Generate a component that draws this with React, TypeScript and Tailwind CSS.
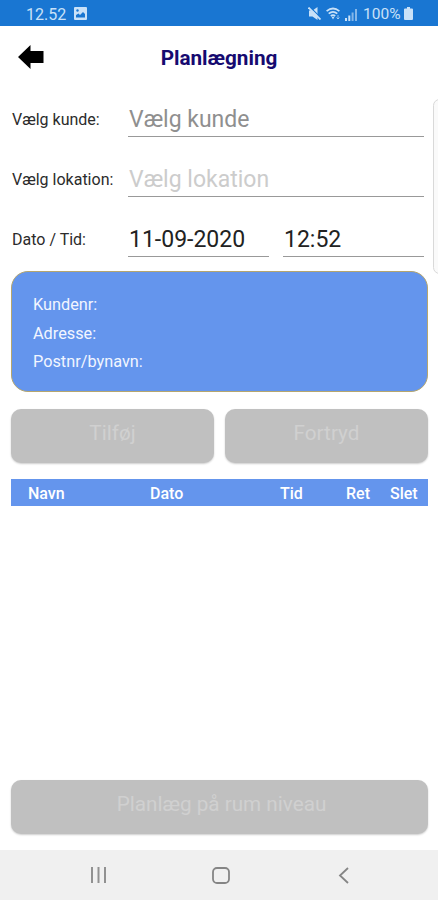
import type { ReactNode } from 'react'

interface FieldRowProps {
  label: string
  children: ReactNode
}

function FieldRow({ label, children }: FieldRowProps) {
  return (
    <div className="flex h-[60px] items-center pl-3 pr-3.5">
      <span className="w-[116px] shrink-0 whitespace-nowrap pt-0.5 text-[16px] text-[#2b2b2b]">{label}</span>
      {children}
    </div>
  )
}

interface FieldProps {
  value: string
  className: string
}

function Field({ value, className }: FieldProps) {
  return (
    <div
      className={`flex h-9 items-center whitespace-nowrap border-b border-[#999999] pl-px pt-[3px] text-[23px] ${className}`}
    >
      {value}
    </div>
  )
}

interface DisabledButtonProps {
  label: string
  className: string
}

function DisabledButton({ label, className }: DisabledButtonProps) {
  return (
    <button
      disabled
      className={`h-[54px] rounded-[10px] bg-[#c0c0c0] pb-1 text-[20.7px] text-[#d0d0d0] shadow-[0_1px_2px_rgba(0,0,0,0.2)] ${className}`}
    >
      {label}
    </button>
  )
}

function StatusBar() {
  return (
    <div className="flex h-[26px] shrink-0 items-center bg-[#1976d2] pl-[26px] pr-[25px] pt-[3px] text-[16px] text-[#c9e1f8]">
      <span className="w-[48px]">12.52</span>
      {/* Picture notification */}
      <svg className="-mt-0.5" width="13" height="13" viewBox="0 0 13 13" fill="none">
        <rect width="13" height="13" rx="1" fill="#c9e1f8" />
        <path d="M2 10.500V8l2.500-1.500L6 8l3-3 2 2v3.500z" fill="#1976d2" />
        <circle cx="3.500" cy="3.500" r="1.200" fill="#1976d2" />
      </svg>
      <div className="ml-auto flex items-center">
        {/* Muted speaker */}
        <svg className="-mt-0.5" width="13" height="13" viewBox="0 0 13 13" fill="#c9e1f8">
          <path d="M1 3.500h3.500L9.500 0v13L4.500 9.500H1z" />
          <path d="M2 0l11 11" stroke="#1976d2" strokeWidth="1.200" />
          <path d="M.5 .5L12.500 12.500" stroke="#c9e1f8" strokeWidth="1.800" />
        </svg>
        {/* Wifi */}
        <svg className="-mt-0.5 ml-[5px]" width="15" height="13" viewBox="0 0 15 13" fill="none" stroke="#c9e1f8" strokeWidth="1.700">
          <path d="M.6 4.200Q7 -1.200 13.400 4.200" />
          <path d="M2.700 6.700Q7 3 11.300 6.700" />
          <path d="M4.800 9Q7 7.200 9.200 9" />
          <path d="M5.500 9.800L7 12.500l1.500-2.700z" fill="#c9e1f8" stroke="none" />
          <path d="M12 8v4M10.500 10.500L12 12l1.500-1.500" strokeWidth="1" opacity=".7" />
        </svg>
        {/* Signal */}
        <svg className="ml-1" width="13" height="12" viewBox="0 0 13 12" fill="#c9e1f8">
          <path d="M0 9h2v3H0zM3.300 6.500h2V12h-2z" />
          <path d="M6.600 3.500h2V12h-2zM10 0h2v12h-2z" opacity=".6" />
        </svg>
        <span className="ml-[5px] w-[39px] whitespace-nowrap text-[15.500px]">100%</span>
        {/* Battery */}
        <svg className="-mt-0.5 ml-0.5" width="9" height="13" viewBox="0 0 9 13" fill="#c9e1f8">
          <path d="M3 0h3v1.500h2q1 0 1 1V12q0 1-1 1H1q-1 0-1-1V2.500q0-1 1-1h2z" />
        </svg>
      </div>
    </div>
  )
}

function NavigationBar() {
  return (
    <div className="flex h-[50px] shrink-0 items-center bg-[#f0f0f0] pl-[90px] pr-[89px]">
      <svg width="17" height="16" viewBox="0 0 17 16" stroke="#919191" strokeWidth="2">
        <path d="M2 0v16M8.500 0v16M15 0v16" />
      </svg>
      <svg className="ml-[105px]" width="18" height="17" viewBox="0 0 18 17" fill="none" stroke="#858585" strokeWidth="1.800">
        <rect x="1" y="1" width="16" height="15" rx="4" />
      </svg>
      <svg className="ml-auto" width="11" height="17" viewBox="0 0 11 17" fill="none" stroke="#858585" strokeWidth="1.800">
        <path d="M10 1L2 8.500L10 16" />
      </svg>
    </div>
  )
}

export default function App() {
  return (
    <div className="relative flex h-[900px] w-[438px] flex-col overflow-hidden bg-white font-['Roboto','Liberation_Sans',sans-serif]">
      <StatusBar />

      {/* Header */}
      <header className="grid h-[63px] shrink-0 grid-cols-[1fr_auto_1fr] items-center px-[18px]">
        <svg className="-mt-px" width="26" height="26" viewBox="0 0 26 26" fill="#000">
          <path d="M0 13L12.500 1v6H25.500v12H12.500v6z" />
        </svg>
        <h1 className="pt-0.5 text-[20.7px] font-bold text-[#160a70]">Planlægning</h1>
      </header>

      {/* Form */}
      <FieldRow label="Vælg kunde:">
        <Field value="Vælg kunde" className="flex-1 text-[#8f8f8f]" />
      </FieldRow>
      <FieldRow label="Vælg lokation:">
        <Field value="Vælg lokation" className="flex-1 text-[#cccccc]" />
      </FieldRow>
      <FieldRow label="Dato / Tid:">
        <Field value="11-09-2020" className="w-[141px] text-[#222222]" />
        <Field value="12:52" className="ml-3.5 flex-1 text-[#222222]" />
      </FieldRow>

      <main className="flex flex-1 flex-col pl-[11px] pr-2.5 pt-0.5">
        {/* Customer details */}
        <div className="h-[121px] rounded-[17px] border border-[#b5a66f] bg-[#6495ed] pl-[21px] pt-[19px] text-[16.300px] leading-[28.500px] text-[#f2f6ff]">
          <p>Kundenr:</p>
          <p>Adresse:</p>
          <p>Postnr/bynavn:</p>
        </div>

        <div className="mt-[17px] flex gap-[11px]">
          <DisabledButton label="Tilføj" className="flex-1" />
          <DisabledButton label="Fortryd" className="flex-1" />
        </div>

        {/* Table header */}
        <div className="mt-4 flex h-[27px] items-center bg-[#6495ed] pl-[17px] pt-[3px] text-[16px] font-medium text-white">
          <span className="w-[122px]">Navn</span>
          <span className="w-[130px]">Dato</span>
          <span className="w-[66px]">Tid</span>
          <span className="w-[44px]">Ret</span>
          <span>Slet</span>
        </div>

        <DisabledButton label="Planlæg på rum niveau" className="mb-4 mt-auto w-full pl-1" />
      </main>

      <NavigationBar />

      {/* Edge panel handle */}
      <div className="absolute -right-2 top-[99px] h-[175px] w-[13px] rounded-lg border border-[#d9d9d9] bg-[#fafafa]" />
    </div>
  )
}
